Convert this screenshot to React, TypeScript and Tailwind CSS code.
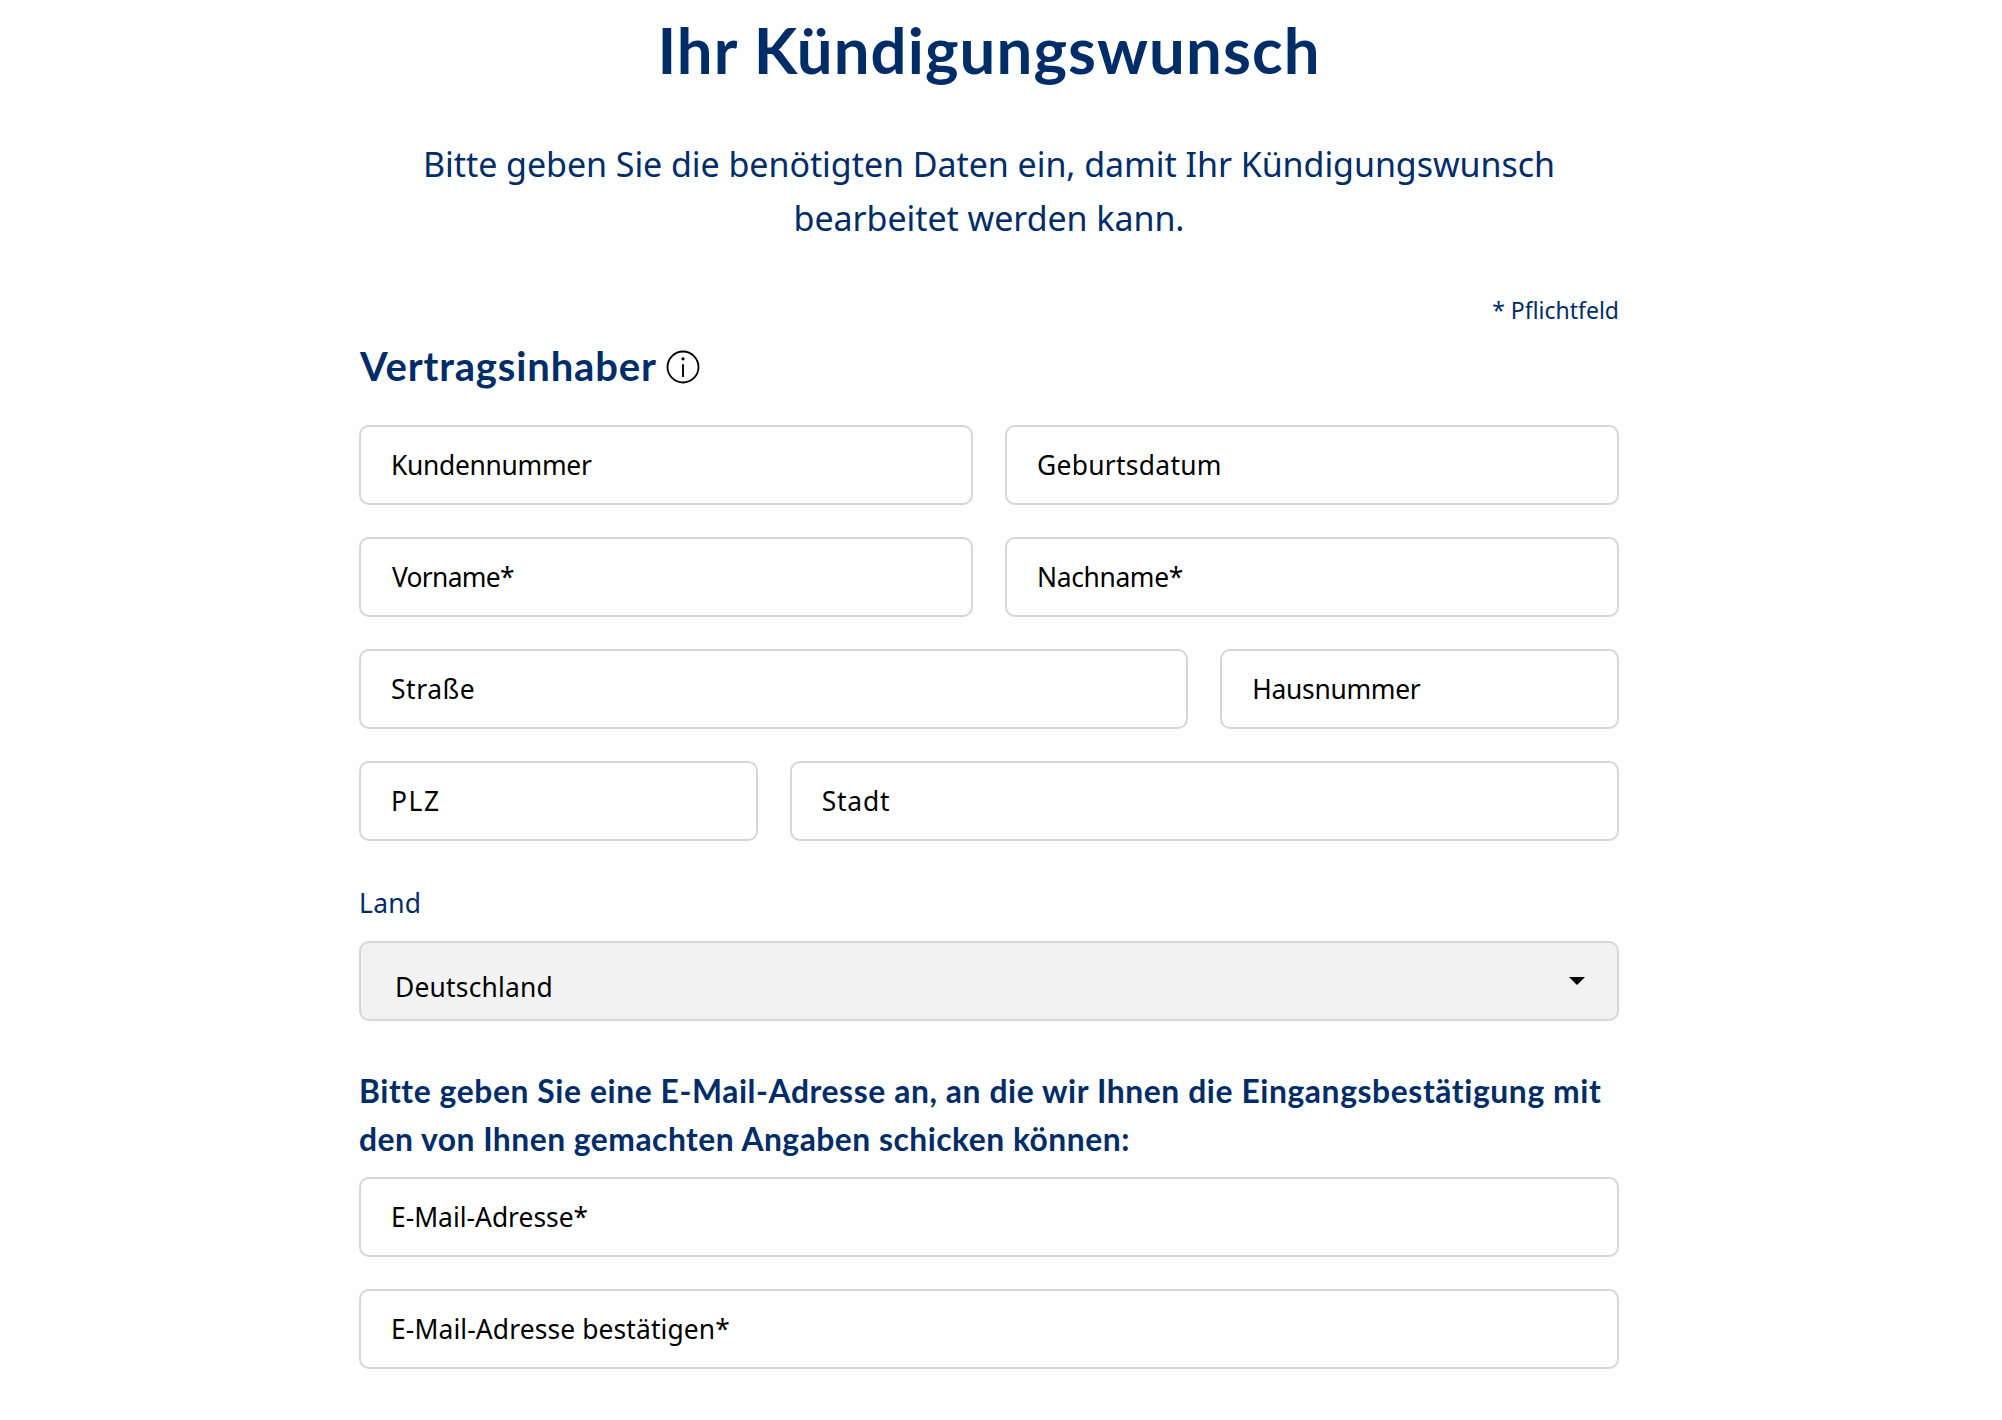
import clsx from "clsx";

type FieldProps = {
  label: string;
  className?: string;
  labelClassName?: string;
};

const contractFields: FieldProps[] = [
  { label: "Kundennummer", className: "col-span-3", labelClassName: "tracking-[-0.3px]" },
  { label: "Geburtsdatum", className: "col-span-3", labelClassName: "tracking-[0.3px]" },
  { label: "Vorname*", className: "col-span-3", labelClassName: "ml-px tracking-[-0.7px]" },
  { label: "Nachname*", className: "col-span-3", labelClassName: "tracking-[-0.35px]" },
  { label: "Straße", className: "col-span-4", labelClassName: "tracking-[0.6px]" },
  { label: "Hausnummer", className: "col-span-2", labelClassName: "tracking-[-0.3px]" },
  { label: "PLZ", className: "col-span-2", labelClassName: "tracking-[1.6px]" },
  { label: "Stadt", className: "col-span-4", labelClassName: "tracking-[0.8px]" },
];

const emailFields: FieldProps[] = [
  { label: "E-Mail-Adresse*" },
  { label: "E-Mail-Adresse bestätigen*", labelClassName: "tracking-[0.12px]" },
];

function Field({ label, className, labelClassName }: FieldProps) {
  return (
    <label
      className={clsx(
        "flex h-20 items-center rounded-[10px] border-2 border-[#d4d6d7] bg-white pt-0.5 pl-[30px] text-[26.4px] text-black",
        className,
      )}
    >
      <span className={labelClassName}>{label}</span>
    </label>
  );
}

function InfoIcon() {
  return (
    <svg viewBox="0 0 34 34" className="mt-0.5 size-[34px] shrink-0 text-black" fill="none">
      <circle cx="17" cy="17" r="15.5" stroke="currentColor" strokeWidth="1.8" />
      <circle cx="17" cy="8.8" r="1.6" fill="currentColor" />
      <path d="M17 14.2v12.8" stroke="currentColor" strokeWidth="1.9" />
    </svg>
  );
}

export default function App() {
  return (
    <main className="min-h-[1420px] bg-[#fefefe] pt-2.5 pr-6 font-['Noto_Sans',sans-serif] text-[#002d67]">
      <div className="mx-auto w-[1260px]">
        <h1 className="text-center font-['Lato',sans-serif] text-[63.5px] leading-[80px] font-bold tracking-[1.1px]">
          Ihr Kündigungswunsch
        </h1>
        <p className="mt-[47px] text-center text-[34px] leading-[54px] tracking-[-0.06px]">
          Bitte geben Sie die benötigten Daten ein, damit Ihr Kündigungswunsch
          <br />
          bearbeitet werden kann.
        </p>

        <p className="mt-[49px] text-right text-[23px] leading-8">* Pflichtfeld</p>

        <div className="mt-4 flex items-center gap-[9px] pl-px">
          <h2 className="font-['Lato',sans-serif] text-[40px] leading-[48px] font-bold tracking-[0.85px]">
            Vertragsinhaber
          </h2>
          <InfoIcon />
        </div>

        <div className="mt-[35px] grid grid-cols-6 gap-8">
          {contractFields.map((field) => (
            <Field key={field.label} {...field} />
          ))}
        </div>

        <p className="mt-[42px] text-[26.4px] leading-10 tracking-[0.3px]">Land</p>
        <div className="mt-[18px] flex h-20 items-center justify-between rounded-[10px] border-2 border-[#d4d6d7] bg-[#f2f2f2] pr-[32px] pl-[34px] text-black">
          <span className="pt-3.5 text-[26.4px] tracking-[0.2px]">Deutschland</span>
          <svg viewBox="0 0 16 8" className="h-2 w-4 fill-current">
            <path d="M0 0h16L8 8z" />
          </svg>
        </div>

        <h3 className="mt-[46px] font-['Lato',sans-serif] text-[31.8px] leading-[48px] font-bold whitespace-nowrap">
          <span className="block tracking-[0.6px]">
            Bitte geben Sie eine E-Mail-Adresse an, an die wir Ihnen die Eingangsbestätigung mit
          </span>
          <span className="block tracking-[0.5px]">
            den von Ihnen gemachten Angaben schicken können:
          </span>
        </h3>
        <div className="mt-3.5 grid gap-8">
          {emailFields.map((field) => (
            <Field key={field.label} {...field} />
          ))}
        </div>
      </div>
    </main>
  );
}
